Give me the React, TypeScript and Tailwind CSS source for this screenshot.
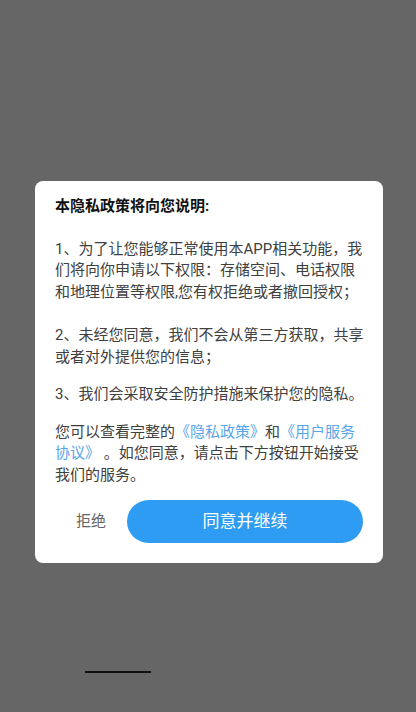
import React from 'react'

const FONT = { fontFamily: 'Roboto, "Noto Sans CJK SC", sans-serif' }

function Link({ children }: { children: React.ReactNode }) {
  return <span className="text-[#5aa5ea]">{children}</span>
}

export default function App() {
  return (
    <div className="w-[416px] h-[712px] bg-[#666666] flex flex-col overflow-hidden" style={FONT}>
      {/* Dialog */}
      <div className="mt-[181px] ml-[35px] w-[348px] bg-white rounded-[8px] px-5 pt-[15px] pb-5">
        <p className="text-[15px] leading-[21.5px] font-bold text-[#111]">本隐私政策将向您说明:</p>

        <div className="text-[15px] leading-[21.5px] text-[#404040] whitespace-nowrap">
          <p className="mt-[21px]">
            1、为了让您能够正常使用本APP相关功能，我
            <br />
            们将向你申请以下权限：存储空间、电话权限
            <br />
            和地理位置等权限,您有权拒绝或者撤回授权；
          </p>
          <p className="mt-[22px]">
            2、未经您同意，我们不会从第三方获取，共享
            <br />
            或者对外提供您的信息；
          </p>
          <p className="mt-[16px]">3、我们会采取安全防护措施来保护您的隐私。</p>
          <p className="mt-[16px]">
            您可以查看完整的<Link>《隐私政策》</Link>和<Link>《用户服务</Link>
            <br />
            <Link>协议》</Link> 。如您同意，请点击下方按钮开始接受
            <br />
            我们的服务。
          </p>
        </div>

        {/* Actions */}
        <div className="mt-[14px] flex items-center">
          <button type="button" className="w-[72px] text-center text-[15px] text-[#666]">
            拒绝
          </button>
          <button
            type="button"
            className="flex-1 h-[43px] rounded-full bg-[#2f9cf4] text-white text-[17px] flex items-center justify-center"
          >
            同意并继续
          </button>
        </div>
      </div>

      {/* Bottom bar indicator */}
      <div className="mt-[108px] ml-[85px] w-[66px] h-[2px] bg-[#111]" />
    </div>
  )
}
